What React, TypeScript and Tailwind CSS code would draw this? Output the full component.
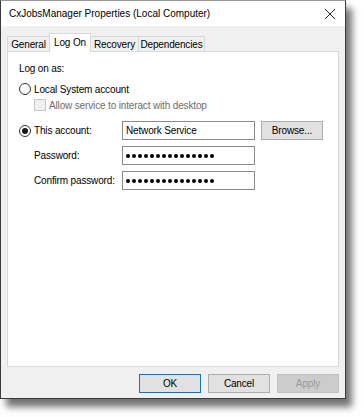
import React from "react";

const font = { fontFamily: '"Liberation Sans", Arial, sans-serif' };

function Radio({ checked }: { checked?: boolean }) {
  return (
    <span className="w-[12px] h-[12px] rounded-full border border-[#333333] bg-white flex items-center justify-center shrink-0">
      {checked && <span className="w-[6px] h-[6px] rounded-full bg-[#1a1a1a]" />}
    </span>
  );
}

function Dots() {
  return (
    <div className="flex gap-[2px] items-center">
      {Array.from({ length: 15 }).map((_, i) => (
        <span key={i} className="w-[4px] h-[4px] rounded-full bg-black" />
      ))}
    </div>
  );
}

function Btn({ children, kind }: { children: React.ReactNode; kind?: "default" | "disabled" }) {
  const cls =
    kind === "default"
      ? "border-[#0078d7] bg-[#e1e1e1] text-black"
      : kind === "disabled"
      ? "border-[#bfbfbf] bg-[#cccccc] text-[#9a9a9a]"
      : "border-[#adadad] bg-[#e1e1e1] text-black";
  return (
    <div className={`w-[62px] h-[19px] border flex items-center justify-center text-[10px] tracking-[-0.15px] ${cls}`}>
      {children}
    </div>
  );
}

export default function App() {
  return (
    <div className="w-[364px] h-[417px] bg-white" style={font}>
      <div className="w-[346px] h-[399px] bg-[#f0f0f0] border border-[#3a3a3a] border-t-[#9a9a9a] flex flex-col shadow-[6px_8px_7px_rgba(0,0,0,0.55)]">
        {/* Title bar */}
        <div className="h-[25px] bg-white flex items-center justify-between pl-[8px] pr-[8px] shrink-0">
          <span className="text-[10px] text-black">CxJobsManager Properties (Local Computer)</span>
          <svg width="12" height="12" viewBox="0 0 12 12" className="mr-[1px]">
            <path d="M1 1 L11 11 M11 1 L1 11" stroke="#222" strokeWidth="1" />
          </svg>
        </div>
        {/* Body */}
        <div className="flex flex-col pl-[6px] pt-[7px]">
          {/* Tabs */}
          <div className="flex items-end h-[18px] text-[10px] tracking-[-0.15px] text-black relative z-10">
            <div className="h-[15px] w-[42px] border border-b-0 border-r-0 border-[#d9d9d9] bg-[#f0f0f0] flex items-center justify-center">General</div>
            <div className="h-[19px] mb-[-1px] w-[42px] border border-b-0 border-[#d9d9d9] bg-white flex items-center justify-center pb-[1px]">Log On</div>
            <div className="h-[15px] w-[48px] border border-b-0 border-l-0 border-[#d9d9d9] bg-[#f0f0f0] flex items-center justify-center">Recovery</div>
            <div className="h-[15px] w-[66px] border border-b-0 border-l-0 border-[#d9d9d9] bg-[#f0f0f0] flex items-center justify-center">Dependencies</div>
          </div>
          {/* Panel */}
          <div className="w-[332px] h-[316px] bg-white border border-[#d9d9d9] flex flex-col pl-[11px] pt-[9px] text-[10px] tracking-[-0.15px] text-black">
            <div className="h-[14px] flex items-center">Log on as:</div>
            <div className="mt-[7px] h-[14px] flex items-center gap-[3px]">
              <Radio />
              <span>Local System account</span>
            </div>
            <div className="mt-[2px] h-[14px] flex items-center gap-[3px] pl-[15px] text-[#6d6d6d]">
              <span className="w-[12px] h-[12px] border border-[#c6c6c6] bg-[#f0f0f0] shrink-0" />
              <span>Allow service to interact with desktop</span>
            </div>
            <div className="mt-[9px] flex items-center">
              <div className="w-[103px] flex items-center gap-[3px]">
                <Radio checked />
                <span>This account:</span>
              </div>
              <div className="w-[133px] h-[19px] border border-[#8a8a8a] bg-white flex items-center pl-[3px]">Network Service</div>
              <div className="ml-[6px]">
                <Btn>Browse...</Btn>
              </div>
            </div>
            <div className="mt-[6px] flex items-center">
              <div className="w-[103px] pl-[15px]">Password:</div>
              <div className="w-[133px] h-[19px] border border-[#8a8a8a] bg-white flex items-center pl-[3px]">
                <Dots />
              </div>
            </div>
            <div className="mt-[6px] flex items-center">
              <div className="w-[103px] pl-[15px]">Confirm password:</div>
              <div className="w-[133px] h-[19px] border border-[#8a8a8a] bg-white flex items-center pl-[3px]">
                <Dots />
              </div>
            </div>
          </div>
          {/* Buttons */}
          <div className="w-[332px] flex justify-end gap-[7px] mt-[7px]">
            <Btn kind="default">OK</Btn>
            <Btn>Cancel</Btn>
            <Btn kind="disabled">Apply</Btn>
          </div>
        </div>
      </div>
    </div>
  );
}
